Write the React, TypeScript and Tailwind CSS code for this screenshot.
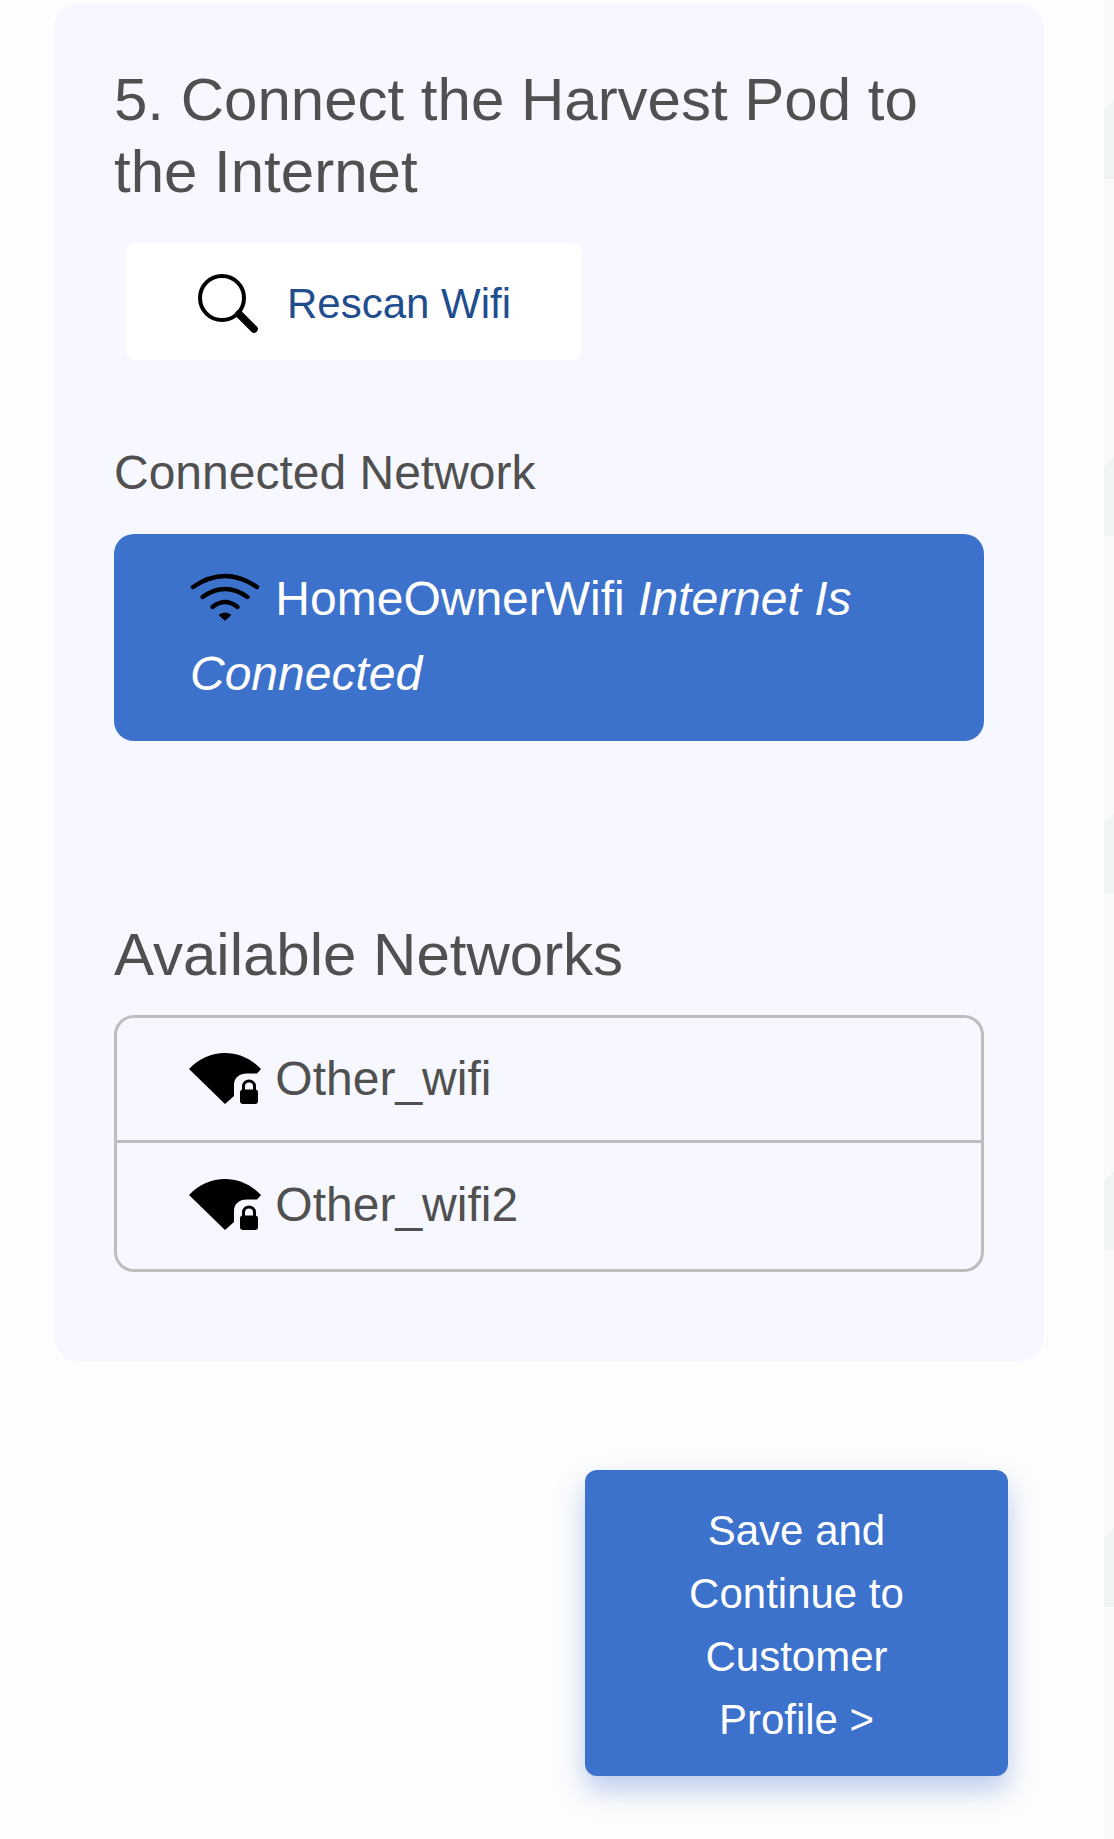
const sans = 'font-["Liberation_Sans",Arial,sans-serif]';

const networks = ['Other_wifi', 'Other_wifi2'];

function SearchIcon() {
  return (
    <svg width="62" height="62" viewBox="0 0 62 62" className="shrink-0">
      <circle cx="25" cy="27" r="22" fill="none" stroke="#000" strokeWidth="4" />
      <path d="M42 43 L57 58" stroke="#000" strokeWidth="7.500" strokeLinecap="round" />
    </svg>
  );
}

function WifiIcon() {
  return (
    <svg width="72" height="48" viewBox="0 0 72 48" className="inline-block align-[-6px]">
      <g fill="none" stroke="#000" strokeWidth="4.400" strokeLinecap="round">
        <path d="M3 14 Q35 -8 67 14" />
        <path d="M12.500 24 Q35 8 57.500 24" />
        <path d="M22.500 34 Q35 24 47.500 34" />
      </g>
      <path d="M35 46.500 L30 42 Q35 39 40 42 Z" fill="#000" stroke="#000" strokeWidth="2" strokeLinejoin="round" />
    </svg>
  );
}

function LockedWifiIcon() {
  return (
    <svg width="73" height="51" viewBox="0 0 73 51" className="inline-block align-[-9px]">
      <path
        d="M0 16 C20 -5.300 52 -5.300 72 16 L68 20.500 L58 20.500 C50 20.500 45 25 45 32 L45 43 L36 51 Z"
        fill="#000"
      />
      <path d="M54.500 38 L54.500 33.500 C54.500 26 65.500 26 65.500 33.500 L65.500 38" fill="none" stroke="#000" strokeWidth="3" />
      <rect x="51" y="36.500" width="18" height="14.500" rx="3" fill="#000" />
    </svg>
  );
}

export default function App() {
  return (
    <div className={`${sans} flex h-[1839px] w-[1114px] overflow-hidden bg-[#fdfdfd]`}>
      <main className="w-[1104px] shrink-0">
        <section className="ml-[54px] mt-[3px] h-[1359px] w-[990px] rounded-[26px] bg-[#f7f8ff] px-[60px] pt-[61px]">
          <h2 className="text-[60px] leading-[72px] font-normal text-[#505050]">
            5. Connect the Harvest Pod to the Internet
          </h2>

          <button className="ml-[12px] mt-[35px] flex h-[117px] w-[456px] items-center rounded-[10px] bg-white pl-[71px]">
            <SearchIcon />
            <span className="ml-[28px] pt-[4px] text-[42px] text-[#1f4e8f]">Rescan Wifi</span>
          </button>

          <p className="mt-[83px] text-[48px] leading-[60px] text-[#505050]">Connected Network</p>

          <div className="mt-[31px] h-[207px] w-[870px] rounded-[20px] bg-[#3c71cc] pl-[76px] pr-[60px] pt-[27px] text-[48px] leading-[75px] text-white">
            <WifiIcon /> HomeOwnerWifi <em>Internet Is Connected</em>
          </div>

          <p className="mt-[178px] text-[60px] leading-[72px] text-[#505050]">Available Networks</p>

          <div className="mt-[24px] h-[257px] w-[870px] rounded-[20px] border-[3px] border-[#bdbdbd]">
            {networks.map((name, i) => (
              <div
                key={name}
                className={`pl-[72px] text-[48px] leading-[75px] text-[#505050] ${
                  i > 0 ? 'h-[129px] border-t-[3px] border-[#bdbdbd] pt-[24px]' : 'h-[122px] pt-[23px]'
                }`}
              >
                <LockedWifiIcon /> {name}
              </div>
            ))}
          </div>
        </section>

        <button className="ml-[585px] mt-[108px] block h-[306px] w-[423px] rounded-[12px] bg-[#3c71cc] px-[70px] pt-[3px] text-[42px] leading-[63px] text-white shadow-[0_14px_28px_rgba(61,113,205,0.35)]">
          Save and Continue to Customer Profile &gt;
        </button>
      </main>

      {/* faint strip down the right edge */}
      <aside className="flex h-full w-[10px] shrink-0 flex-col gap-[278px] bg-[#fafafa] pt-[100px]">
        {[0, 1, 2, 3, 4].map((i) => (
          <div key={i} className="h-[79px] shrink-0 bg-[#eff5f4] [clip-path:polygon(0_10px,100%_0,100%_100%,0_100%)]" />
        ))}
      </aside>
    </div>
  );
}
